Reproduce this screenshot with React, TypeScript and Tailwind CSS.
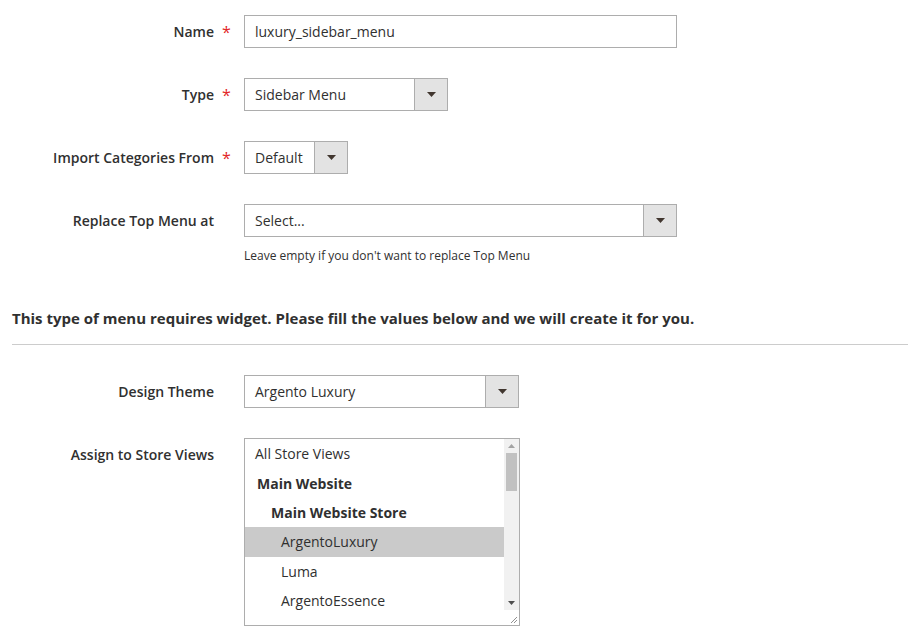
import React from "react";

const Arrow = () => (
  <svg width="9" height="5" viewBox="0 0 9 5" className="block">
    <path d="M0 0 H9 L4.5 5 Z" fill="#41362f" />
  </svg>
);

const SelectBox = ({ value, width }: { value: string; width: string }) => (
  <div className={`flex h-[33px] border border-[#adadad] bg-white ${width}`}>
    <div className="flex flex-1 items-center pl-[10px] text-[14px] text-[#303030]">{value}</div>
    <div className="flex w-[33px] items-center justify-center border-l border-[#adadad] bg-[#e3e3e3]">
      <Arrow />
    </div>
  </div>
);

const Label = ({ text, required }: { text: string; required?: boolean }) => (
  <div className="flex h-[33px] shrink-0 items-center">
    <div className="w-[214px] text-right text-[14px] font-semibold text-[#303030]">{text}</div>
    <div className="w-[30px] pl-[8px] text-[16px] text-[#e22626]">{required ? "*" : ""}</div>
  </div>
);

const options: { t: string; pl: string; bold?: boolean; sel?: boolean }[] = [
  { t: "All Store Views", pl: "pl-[10px]" },
  { t: "Main Website", pl: "pl-[12px]", bold: true },
  { t: "Main Website Store", pl: "pl-[26px]", bold: true },
  { t: "ArgentoLuxury", pl: "pl-[36px]", sel: true },
  { t: "Luma", pl: "pl-[36px]" },
  { t: "ArgentoEssence", pl: "pl-[36px]" },
  { t: "ArgentoFlat", pl: "pl-[36px]" },
];

export default function App() {
  return (
    <div
      className="h-[640px] w-[920px] overflow-hidden bg-white pt-[15px] text-[#303030]"
      style={{ fontFamily: '"Open Sans", "Noto Sans", sans-serif' }}
    >
      <div className="flex flex-col gap-[30px]">
        <div className="flex">
          <Label text="Name" required />
          <div className="flex h-[33px] w-[433px] items-center border border-[#adadad] pl-[10px] text-[14px]">
            luxury_sidebar_menu
          </div>
        </div>
        <div className="flex">
          <Label text="Type" required />
          <SelectBox value="Sidebar Menu" width="w-[204px]" />
        </div>
        <div className="flex">
          <Label text="Import Categories From" required />
          <SelectBox value="Default" width="w-[104px]" />
        </div>
        <div className="flex">
          <Label text="Replace Top Menu at" />
          <div className="flex flex-col">
            <SelectBox value="Select..." width="w-[433px]" />
            <div className="mt-[10px] text-[12px] leading-[17px] text-[#303030]">
              Leave empty if you don't want to replace Top Menu
            </div>
          </div>
        </div>
      </div>

      <div className="mx-[12px] mt-[44px] border-b border-[#cccccc] pb-[16px]">
        <div className="text-[15px] font-bold leading-[20px] text-[#303030]">
          This type of menu requires widget. Please fill the values below and we will create it for you.
        </div>
      </div>

      <div className="mt-[30px] flex flex-col gap-[30px]">
        <div className="flex">
          <Label text="Design Theme" />
          <SelectBox value="Argento Luxury" width="w-[275px]" />
        </div>
        <div className="flex">
          <Label text="Assign to Store Views" />
          <div className="flex h-[188px] w-[276px] overflow-hidden border border-[#adadad] bg-white">
            <div className="flex-1 overflow-hidden">
              {options.map((o) => (
                <div
                  key={o.t}
                  className={`flex h-[29.4px] items-center text-[14px] ${o.pl} ${o.bold ? "font-bold" : ""} ${
                    o.sel ? "bg-[#cacaca]" : ""
                  }`}
                >
                  {o.t}
                </div>
              ))}
            </div>
            <div className="flex w-[15px] flex-col bg-[#f1f1f1]">
              <div className="flex h-[14px] items-center justify-center">
                <svg width="7" height="4" viewBox="0 0 7 4">
                  <path d="M0 4 L3.5 0 L7 4 Z" fill="#a3a3a3" />
                </svg>
              </div>
              <div className="mx-[2px] h-[38px] bg-[#c1c1c1]" />
              <div className="flex-1" />
              <div className="flex h-[14px] items-center justify-center">
                <svg width="7" height="4" viewBox="0 0 7 4">
                  <path d="M0 0 L7 0 L3.5 4 Z" fill="#505050" />
                </svg>
              </div>
              <div className="flex h-[15px] items-end justify-end bg-white pb-[1px] pr-[1px]">
                <svg width="8" height="8" viewBox="0 0 8 8">
                  <path d="M7 1 L1 7 M7 4 L4 7" stroke="#909090" strokeWidth="1" />
                </svg>
              </div>
            </div>
          </div>
        </div>
      </div>
    </div>
  );
}
